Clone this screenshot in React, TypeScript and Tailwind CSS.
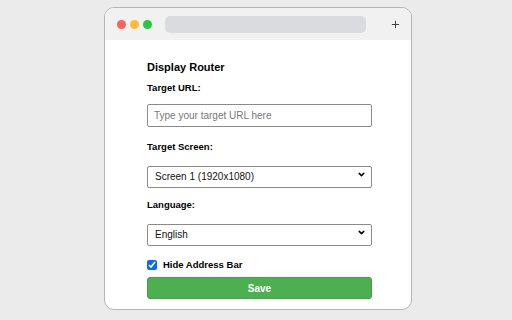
import { ChevronDown, Plus } from "lucide-react";

const font = { fontFamily: '"Liberation Sans", Arial, sans-serif' };

const SelectBox = ({ value }: { value: string }) => (
    <div className="relative mt-[10px] h-[22px] w-full">
        <select
            defaultValue={value}
            className="h-full w-full appearance-none rounded-[2px] border border-[#8a8a8a] bg-white pl-[7px] text-[10px] text-[#111] outline-none"
        >
            <option>{value}</option>
        </select>
        <ChevronDown
            className="pointer-events-none absolute right-[6px] top-[7px] text-black"
            size={9}
            strokeWidth={4}
        />
    </div>
);

export default function App() {
    return (
        <div className="flex h-[320px] w-[512px] justify-center bg-[#ebebeb] pl-[4px] pt-[7px]" style={font}>
            <div className="flex h-[303px] w-[308px] flex-col overflow-hidden rounded-[10px] border border-[#b4b4b4] bg-white">
                {/* Title bar */}
                <div className="flex h-[32px] shrink-0 items-center bg-[#f1f1f1] pl-[12px] pr-[10px]">
                    <div className="flex items-center gap-[4px]">
                        <span className="h-[9px] w-[9px] rounded-full bg-[#fe5f57]" />
                        <span className="h-[9px] w-[9px] rounded-full bg-[#febc2e]" />
                        <span className="h-[9px] w-[9px] rounded-full bg-[#28c840]" />
                    </div>
                    <div className="ml-[13px] h-[17px] w-[201px] rounded-[5px] bg-[#d9dbde]" />
                    <div className="ml-auto">
                        <Plus size={11} strokeWidth={2} className="text-[#333]" />
                    </div>
                </div>

                {/* Body */}
                <div className="flex flex-col pl-[42px] pr-[39px] pt-[20px]">
                    <h2 className="text-[11px] font-bold leading-[14px] text-black">Display Router</h2>

                    <label className="mt-[8px] text-[9.5px] font-bold leading-[12px] text-black">Target URL:</label>
                    <input
                        placeholder="Type your target URL here"
                        className="mt-[10px] h-[23px] w-full rounded-[2px] border border-[#8a8a8a] px-[6px] text-[10px] outline-none placeholder:text-[#777]"
                    />

                    <label className="mt-[14px] text-[9.5px] font-bold leading-[12px] text-black">Target Screen:</label>
                    <SelectBox value="Screen 1 (1920x1080)" />

                    <label className="mt-[14px] text-[9.5px] font-bold leading-[12px] text-black">Language:</label>
                    <SelectBox value="English" />

                    <div className="mt-[16px] flex h-[12px] items-center gap-[6px]">
                        <input type="checkbox" defaultChecked className="m-0 h-[10px] w-[10px] accent-[#0b6bf0]" />
                        <span className="text-[9.5px] font-bold leading-[12px] text-black">Hide Address Bar</span>
                    </div>

                    <button className="mt-[6px] h-[22px] w-full rounded-[3px] border border-[#43a047] bg-[#4caf50] text-[10px] font-bold text-white">
                        Save
                    </button>
                </div>
            </div>
        </div>
    );
}
